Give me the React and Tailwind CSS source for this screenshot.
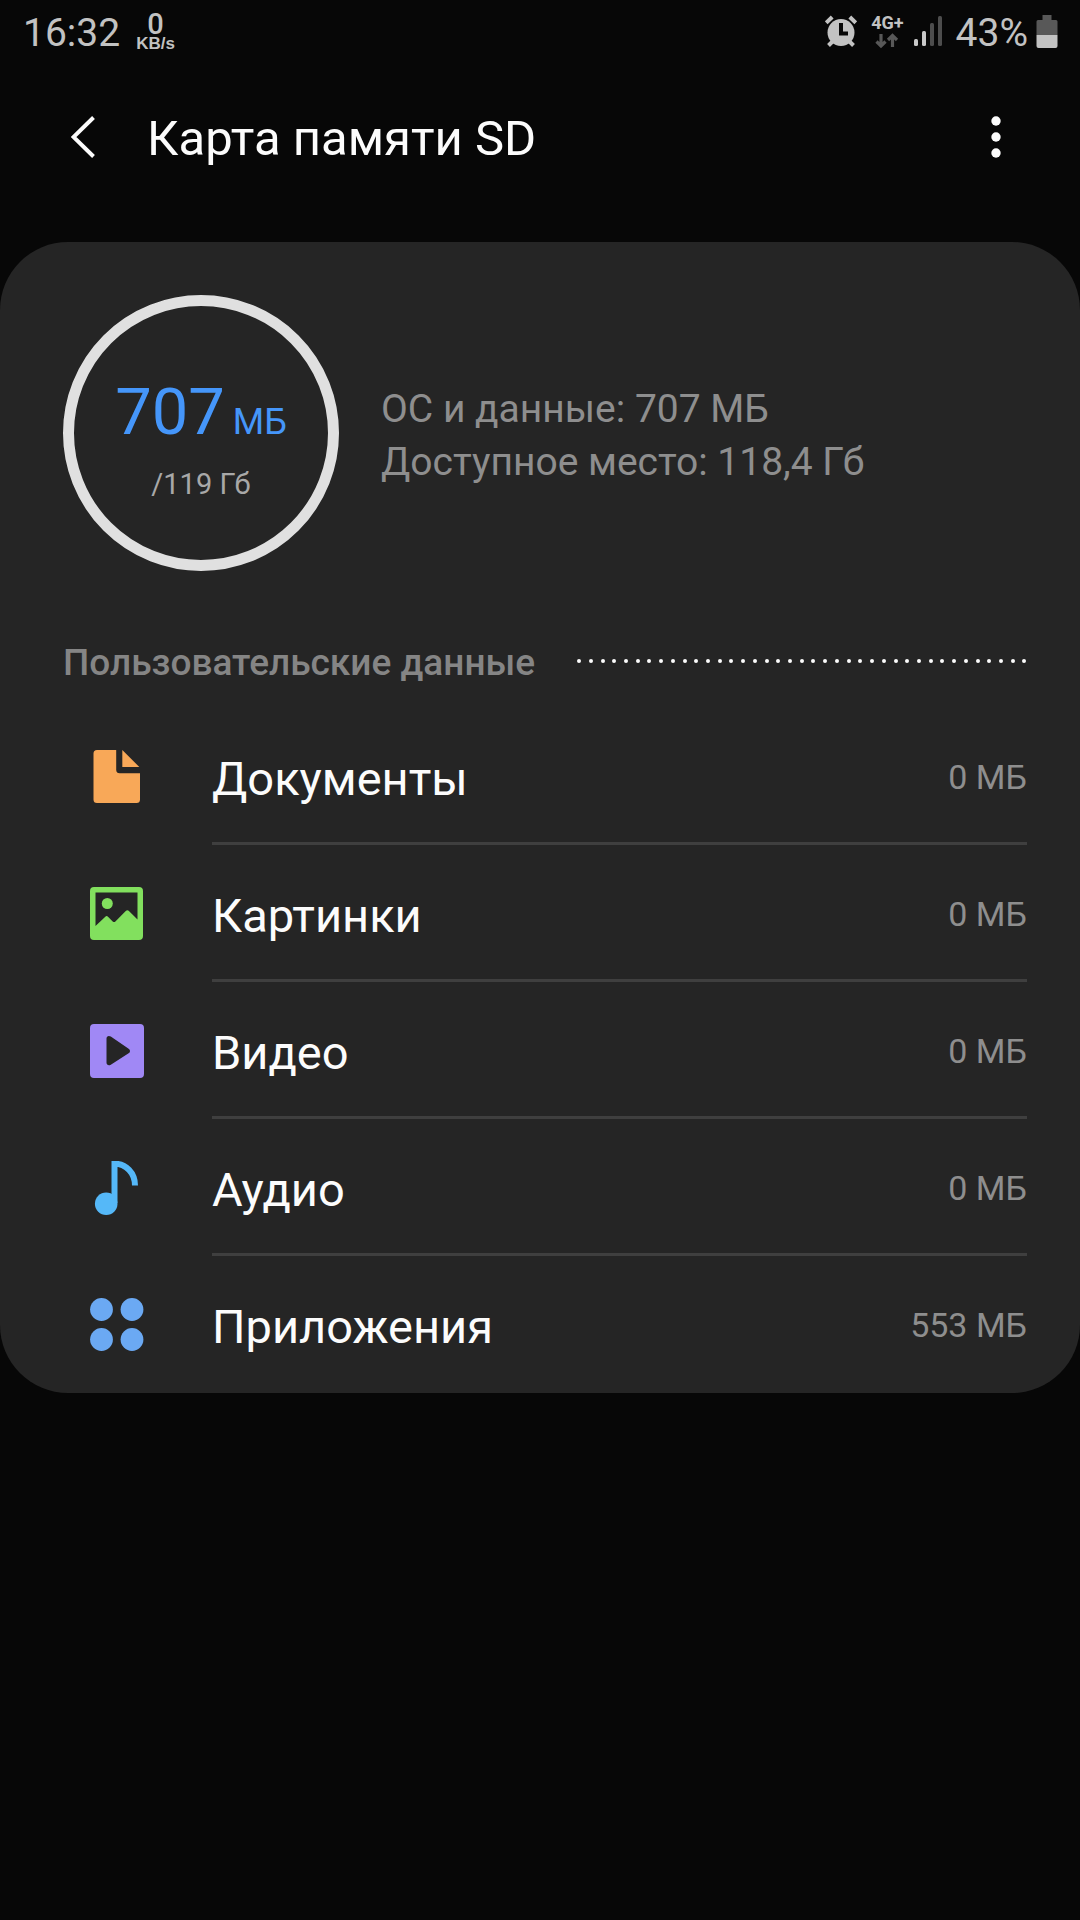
const categories = [
  { name: 'Документы', size: '0 МБ', Icon: DocumentIcon },
  { name: 'Картинки', size: '0 МБ', Icon: PictureIcon },
  { name: 'Видео', size: '0 МБ', Icon: VideoIcon },
  { name: 'Аудио', size: '0 МБ', Icon: AudioIcon },
  { name: 'Приложения', size: '553 МБ', Icon: AppsIcon },
];

const dots = Array.from({ length: 39 }, (_, i) => i);

function DocumentIcon() {
  return (
    <svg className="w-[54px] h-[54px]" viewBox="0 0 54 54" fill="#f8a858" aria-hidden="true">
      <path d="M7 0H26.200v19.800a3.500 3.500 0 0 0 3.500 3.500H50V49.500a3.500 3.500 0 0 1-3.500 3.500H7A3.500 3.500 0 0 1 3.500 49.500v-46A3.500 3.500 0 0 1 7 0Z" />
      <path d="M32.300 0 49.300 17h-17Z" />
    </svg>
  );
}

function PictureIcon() {
  return (
    <svg className="w-[54px] h-[54px]" viewBox="0 0 54 54" fill="#82e05e" aria-hidden="true">
      <path fillRule="evenodd" d="M4 0h45a4 4 0 0 1 4 4v45a4 4 0 0 1-4 4H4a4 4 0 0 1-4-4V4a4 4 0 0 1 4-4Zm1.500 5.500V39L15.300 29.700a2 2 0 0 1 2.700 0L22.700 34.400a2 2 0 0 0 2.700 0L36 23.800a2 2 0 0 1 2.700 0L47.500 32.500v-27Z" />
      <circle cx="17.300" cy="16.500" r="5.500" />
    </svg>
  );
}

function VideoIcon() {
  return (
    <svg className="w-[54px] h-[54px]" viewBox="0 0 54 54" fill="#a088f5" aria-hidden="true">
      <path fillRule="evenodd" d="M4 0h46a4 4 0 0 1 4 4v46a4 4 0 0 1-4 4H4a4 4 0 0 1-4-4V4a4 4 0 0 1 4-4Zm12.500 14.500v24c0 2.500 2.300 3.500 4.300 2.200L39 29a2.500 2.500 0 0 0 0-4L20.800 12.500C18.800 11.200 16.500 12 16.500 14.500Z" />
    </svg>
  );
}

function AudioIcon() {
  return (
    <svg className="w-[54px] h-[54px]" viewBox="0 0 54 54" aria-hidden="true">
      <path d="M24.500 42V2.700C36 2.700 45 12 45 24.500" fill="none" stroke="#55b8f8" strokeWidth="6" />
      <circle cx="16.200" cy="42.700" r="11.300" fill="#55b8f8" />
    </svg>
  );
}

function AppsIcon() {
  return (
    <svg className="w-[54px] h-[54px]" viewBox="0 0 54 54" fill="#6ba9f3" aria-hidden="true">
      <circle cx="11.500" cy="11.500" r="11.400" />
      <circle cx="42" cy="11.500" r="11.400" />
      <circle cx="11.500" cy="41.500" r="11.400" />
      <circle cx="42" cy="41.500" r="11.400" />
    </svg>
  );
}

function AlarmIcon() {
  return (
    <svg className="w-8 h-8" viewBox="0 0 32 32" aria-hidden="true">
      <g stroke="#c2c2c2" strokeWidth="4">
        <path d="M1.200 7.800 7.200 2M30.800 7.800 24.800 2" />
        <path d="M3.500 30.500 8 26M28.500 30.500 24 26" />
      </g>
      <circle cx="16" cy="17.500" r="13.500" fill="#c2c2c2" />
      <path d="M16 8v10.500h7" fill="none" stroke="#070707" strokeWidth="4" />
    </svg>
  );
}

function StatusBar() {
  return (
    <div className="flex items-center justify-between h-[66px] pl-[23px] pr-[22px] text-[#c2c2c2]">
      <div className="flex items-center gap-4">
        <span className="text-[39px] leading-[48px]">16:32</span>
        <div className="flex flex-col items-center pb-[2px]">
          <span className="text-[29px] leading-6 font-medium">0</span>
          <span className="text-[17px] leading-4 font-bold font-['Liberation_Sans',sans-serif]">KB/s</span>
        </div>
      </div>
      <div className="flex items-center">
        <div className="pb-1">
          <AlarmIcon />
        </div>
        <div className="flex flex-col items-center ml-[14px] pb-1">
          <span className="text-[18px] leading-5 font-bold">4G+</span>
          <svg className="w-6 h-4" viewBox="0 0 24 16" fill="none" stroke="#585858" strokeWidth="3.200" aria-hidden="true">
            <path d="M6 1v12M1.500 8.500 6 13l4.500-4.500M17.500 14V2M13 7l4.500-4.500L22 7" />
          </svg>
        </div>
        <svg className="w-7 h-8 ml-[10px] mb-1" viewBox="0 0 28 32" aria-hidden="true">
          <g fill="#c8c8c8">
            <rect x="0" y="24" width="4" height="7" rx="1.500" />
            <rect x="8" y="16" width="4" height="15" rx="1.500" />
          </g>
          <g fill="#4d4d4d">
            <rect x="16" y="8" width="4" height="23" rx="1.500" />
            <rect x="24" y="1" width="4" height="30" rx="1.500" />
          </g>
        </svg>
        <span className="ml-[14px] text-[39px] leading-[48px]">43%</span>
        <svg className="w-[22px] h-[33px] ml-2 mb-1" viewBox="0 0 22 33" aria-hidden="true">
          <path d="M6.500 0h9v5H20a1.500 1.500 0 0 1 1.500 1.500V20h-21V6.500A1.500 1.500 0 0 1 2 5h4.500Z" fill="#585858" />
          <path d="M.5 20h21v11a2 2 0 0 1-2 2h-17a2 2 0 0 1-2-2Z" fill="#c2c2c2" />
        </svg>
      </div>
    </div>
  );
}

function TitleBar() {
  return (
    <header className="flex items-center h-[146px] mb-[30px] pl-[59px] pr-[60px]">
      <button type="button" className="flex items-center justify-center w-12 h-16 pb-1" aria-label="Назад">
        <svg className="w-6 h-11" viewBox="0 0 24 44" fill="none" stroke="#fcfcfc" strokeWidth="4" aria-hidden="true">
          <path d="M22.500 2.500 2.500 22l20 19.500" />
        </svg>
      </button>
      <h1 className="flex-1 ml-10 text-[49px] leading-[64px] text-[#fcfcfc]">Карта памяти SD</h1>
      <button type="button" className="flex items-center justify-center w-12 h-16 pb-1" aria-label="Ещё">
        <svg className="w-[10px] h-[42px]" viewBox="0 0 10 42" fill="#fcfcfc" aria-hidden="true">
          <circle cx="5" cy="5" r="4.700" />
          <circle cx="5" cy="21" r="4.700" />
          <circle cx="5" cy="37" r="4.700" />
        </svg>
      </button>
    </header>
  );
}

function Summary() {
  return (
    <section className="flex items-center gap-[42px] pl-[63px] pr-[53px]">
      <div className="flex flex-col items-center justify-center gap-3 w-[276px] h-[276px] pt-4 rounded-full border-[11px] border-[#e0e0e0] flex-shrink-0">
        <div className="flex items-baseline gap-2 leading-[64px] text-[#4596fa]">
          <span className="text-[65px]">707</span>
          <span className="text-[36px]">МБ</span>
        </div>
        <span className="text-[29px] leading-9 text-[#a8a8a8]">/119 Гб</span>
      </div>
      <div className="pt-[6px] text-[39px] leading-[53px] text-[#8e8e8e]">
        <p>ОС и данные: 707 МБ</p>
        <p>Доступное место: 118,4 Гб</p>
      </div>
    </section>
  );
}

function CategoryRow({ name, size, Icon, last }) {
  return (
    <li>
      <button type="button" className="flex w-full h-[137px] pl-[90px] pr-[53px] text-left">
        <span className="flex items-center w-[122px] h-[134px] pt-1">
          <Icon />
        </span>
        <span className={`flex flex-1 items-center justify-between h-full pt-1 border-b-[3px] ${last ? 'border-transparent' : 'border-[#3f3f3f]'}`}>
          <span className="pt-1 text-[47px] leading-[60px] text-[#fcfcfc]">{name}</span>
          <span className="text-[34px] leading-[44px] text-[#8e8e8e]">{size}</span>
        </span>
      </button>
    </li>
  );
}

export default function App() {
  return (
    <div className="min-h-screen bg-[#070707] font-[Roboto,sans-serif]">
      <StatusBar />
      <TitleBar />
      <main className="pt-[53px] rounded-[68px] bg-[#252525] overflow-hidden">
        <Summary />
        <div className="flex items-center gap-[42px] mt-[68px] mb-[21px] pl-[63px] pr-[53px]">
          <h2 className="text-[37px] leading-[48px] font-medium text-[#858585]">Пользовательские данные</h2>
          <div className="flex flex-1 justify-between pb-1" aria-hidden="true">
            {dots.map((i) => (
              <span key={i} className="w-1 h-1 rounded-full bg-[#fcfcfc]" />
            ))}
          </div>
        </div>
        <ul>
          {categories.map((c, i) => (
            <CategoryRow key={c.name} {...c} last={i === categories.length - 1} />
          ))}
        </ul>
      </main>
    </div>
  );
}
